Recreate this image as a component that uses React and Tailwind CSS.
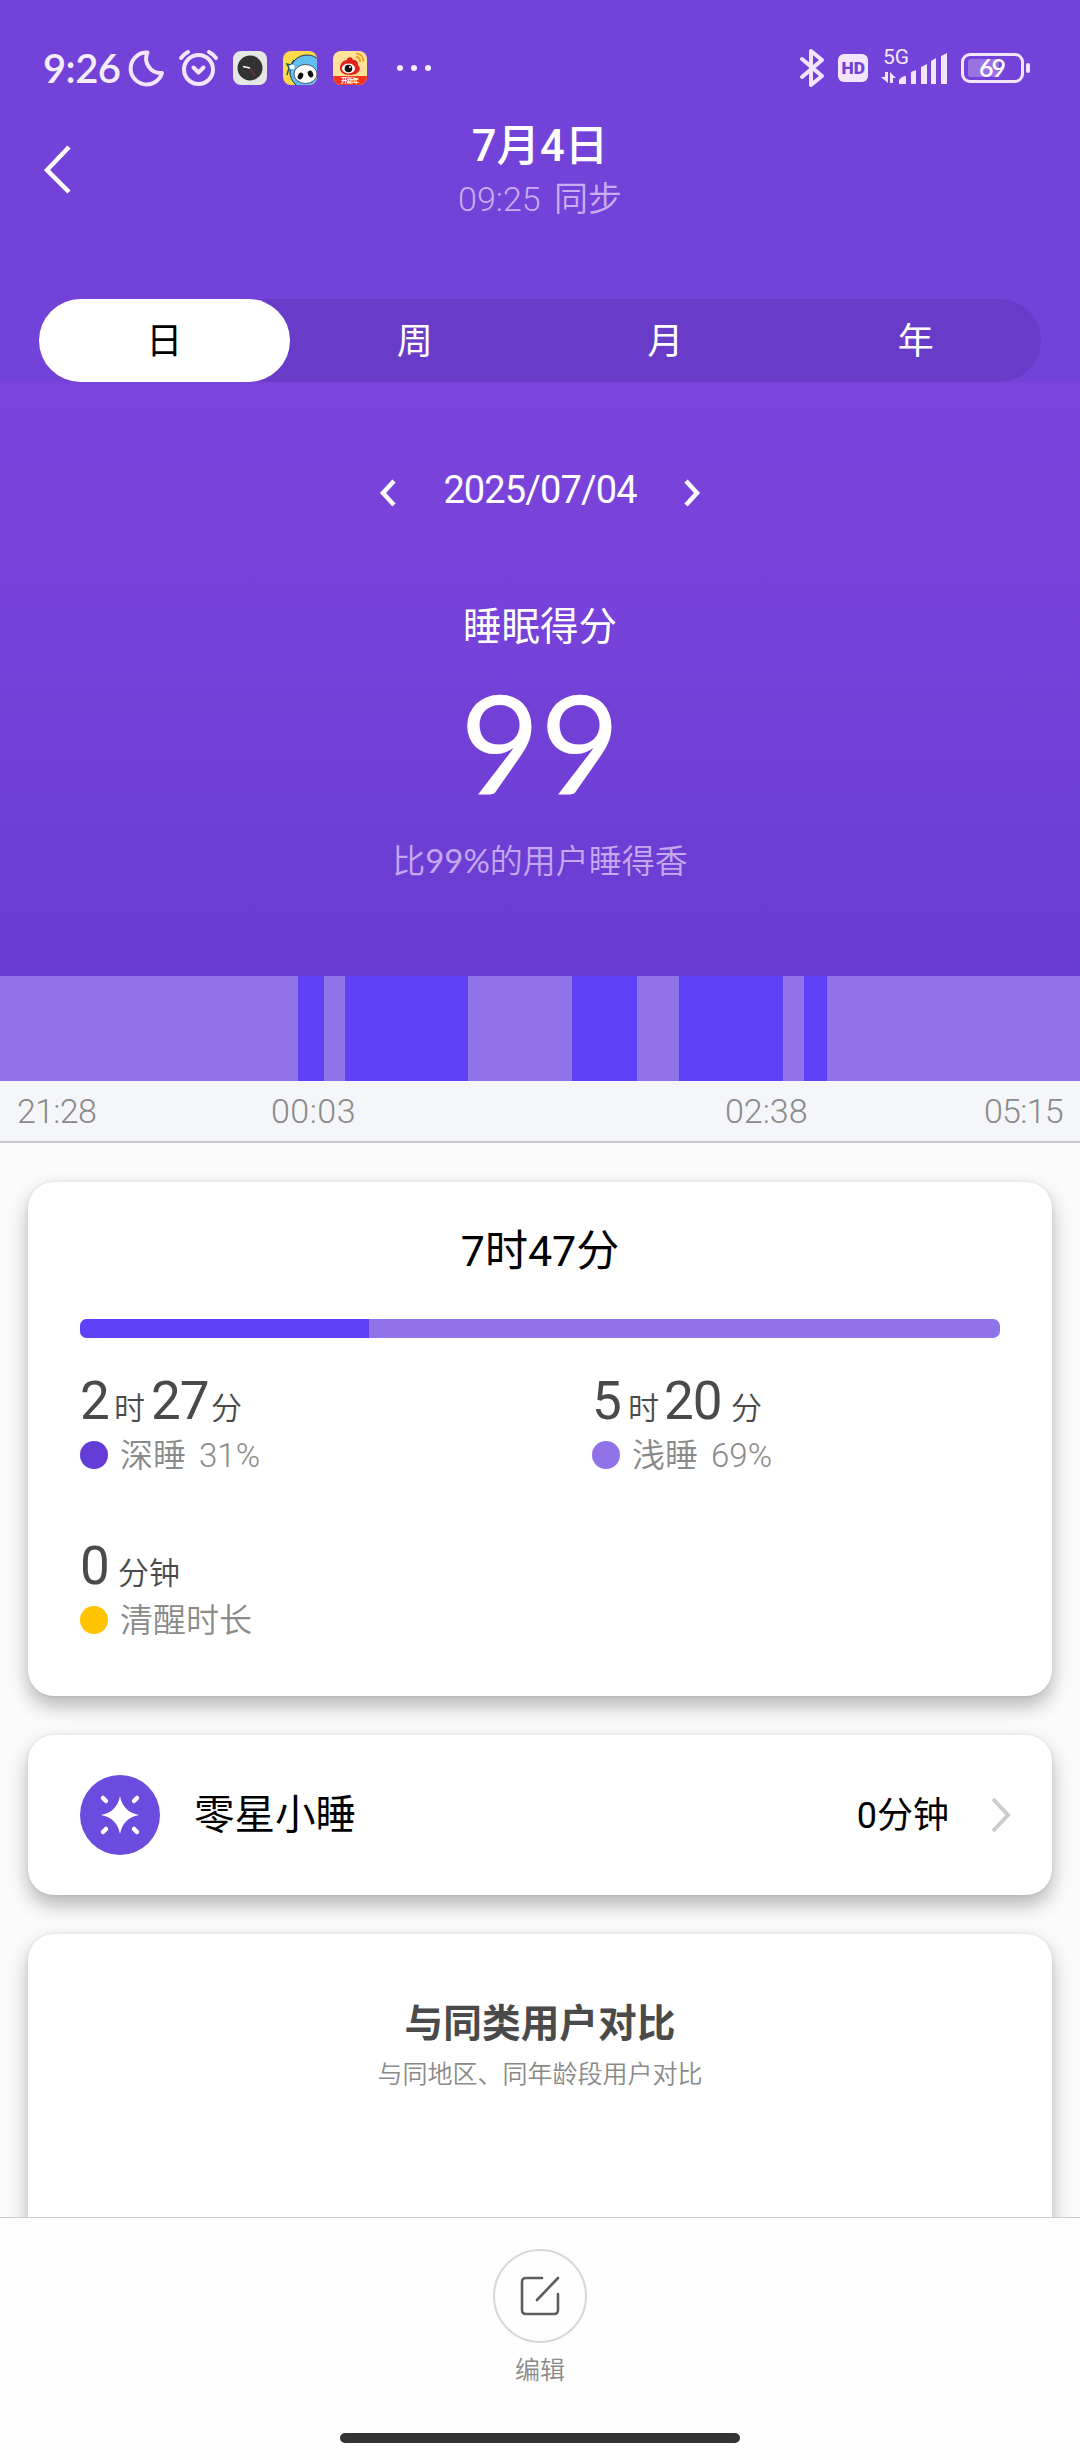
import React from 'react';

const segments = [
  { left: 298, width: 26 },
  { left: 345, width: 123 },
  { left: 572, width: 65 },
  { left: 679, width: 104 },
  { left: 804, width: 23 },
];

const tabs = ['日', '周', '月', '年'];

function StatusBar() {
  return (
    <svg className="block h-24 w-full shrink-0" viewBox="0 0 1080 96" fill="none">
      <text x="43" y="82.500" className="font-[Lato]" fontSize="40" fontWeight="600" textLength="78" fill="#f3edfc">9:26</text>
      {/* do not disturb */}
      <path d="M147.500 52.500A16 16 0 1 0 162 73A14.500 14.500 0 0 1 147.500 52.500Z" stroke="#f3e6fc" strokeWidth="4" strokeLinejoin="round" />
      {/* alarm */}
      <g stroke="#f3e6fc" strokeWidth="4" strokeLinecap="round" strokeLinejoin="round">
        <circle cx="198.500" cy="69.500" r="14.500" />
        <path d="M181 58q3-4 7-6M216 58q-3-4-7-6M193.500 67.500l5 5 5-5" />
      </g>
      {/* clock app */}
      <rect x="233" y="51" width="34" height="34" rx="8" fill="#e6e6e6" />
      <circle cx="250" cy="68" r="12.500" fill="#323232" />
      <path d="M243 66.500l7 1.500" stroke="#fff" strokeWidth="1.500" />
      <path d="M250 68l5 8" stroke="#a33" strokeWidth="1" />
      {/* panda app */}
      <clipPath id="panda"><rect x="283" y="51" width="34" height="34" rx="8" /></clipPath>
      <g clipPath="url(#panda)">
        <rect x="283" y="51" width="34" height="34" fill="#fbd94a" />
        <ellipse cx="307" cy="72" rx="17" ry="17" fill="#62bdf0" stroke="#234" />
        <ellipse cx="305.500" cy="74" rx="11.500" ry="9.500" fill="#fff" stroke="#123" strokeWidth=".7" />
        <ellipse cx="300.500" cy="76" rx="2.600" ry="3.500" fill="#111" transform="rotate(25 300.500 76)" />
        <ellipse cx="310.500" cy="74" rx="2.600" ry="3.500" fill="#111" transform="rotate(-25 310.500 74)" />
        <path d="M287 75l2-7-2-4 4 1 3-5M289 68l4 1" stroke="#145a80" strokeWidth="1.500" />
        <circle cx="292" cy="67" r="2.500" fill="#fff" />
      </g>
      {/* weibo app */}
      <clipPath id="weibo"><rect x="333" y="51" width="34" height="34" rx="8" /></clipPath>
      <g clipPath="url(#weibo)">
        <rect x="333" y="51" width="34" height="34" fill="#ffe19a" />
        <path d="M340 68c0-4 3-8 7-8 0-3 5-4 6 0 4 0 5 2 5 5 5 5-1 10-8 10s-10-3-10-7Z" fill="#e3201b" />
        <ellipse cx="348.500" cy="68.500" rx="6.500" ry="5" fill="#fff" />
        <circle cx="348.500" cy="68.500" r="3.800" fill="#111" />
        <circle cx="350" cy="67" r="1" fill="#fff" />
        <path d="M356 57c3 0 4 2 4 5M356 53.500c5 0 7.500 3.500 7.500 8" stroke="#f5a11c" strokeWidth="1.800" />
        <rect x="333" y="76" width="34" height="9" fill="#f5341c" />
        <text x="341" y="83" fontSize="6.500" fontWeight="700" fill="#fff" textLength="18">开新年</text>
      </g>
      <g fill="#f3edfc">
        <circle cx="400" cy="68" r="3" />
        <circle cx="414" cy="68" r="3" />
        <circle cx="428" cy="68" r="3" />
      </g>
      {/* bluetooth */}
      <path d="M802 59l20 17-11 9V51l11 9-20 17" stroke="#f3e6fc" strokeWidth="4" strokeLinecap="round" strokeLinejoin="round" />
      <rect x="838" y="54" width="30" height="28" rx="6" fill="#f3e6fc" />
      <text x="841.500" y="74" fontSize="16.500" fontWeight="900" textLength="23.500" lengthAdjust="spacingAndGlyphs" fill="#7342d8">HD</text>
      <text x="883" y="64" fontSize="21" textLength="26" fill="#f3e6fc">5G</text>
      {/* signal */}
      <g fill="#f3e6fc">
        <path d="M885 72h3v11l-7-6h4ZM890 83V72l6 6h-3v5Z" />
        <path d="M899 84v-4q3-4 7-4v8ZM911 84V72l5-2v14ZM921 84V67l6-3v20ZM931 84V61l5-3v26ZM941 84V56l6-3v31Z" />
      </g>
      <rect x="962.500" y="54.500" width="60" height="27" rx="7.500" stroke="#f3e6fc" strokeWidth="3" />
      <path d="M971 59h28v18h-28q-3 0-3-3V62q0-3 3-3Z" fill="#9a72e4" />
      <rect x="1026" y="63" width="4" height="10" rx="2" fill="#f3e6fc" />
      <text x="979" y="77" className="font-[Lato]" fontSize="25" fontWeight="600" textLength="27" fill="#fff">69</text>
    </svg>
  );
}

function Stat({ parts, color, label }) {
  return (
    <div className="flex h-[165px] flex-col">
      <div className="flex h-14 items-baseline pt-0.5 whitespace-nowrap text-[#4a4a4a]">
        {parts.map(([num, unit, numClass, unitClass], i) => (
          <React.Fragment key={i}>
            <span className={`text-[53px] leading-[56px] tracking-[-1px] ${numClass}`}>{num}</span>
            <span className={`text-[31px] leading-[56px] font-[350] ${unitClass}`}>{unit}</span>
          </React.Fragment>
        ))}
      </div>
      <div className="mt-1 flex items-center text-[33px] leading-[46px] font-[350] text-[#8a8a8a]">
        <span className={`mr-3 size-7 rounded-full ${color}`}></span>
        <span className="pt-0.5 [word-spacing:5px]">{label}</span>
      </div>
    </div>
  );
}

export default function App() {
  return (
    <div className="flex h-[2460px] w-[1080px] flex-col overflow-hidden bg-[#fbfbfb] font-[Roboto,'Noto_Sans_CJK_SC',sans-serif]">
      {/* Header */}
      <div className="flex h-[382px] shrink-0 flex-col bg-[#7342d9] text-white">
        <StatusBar />
        <div className="flex h-[203px] px-11">
          <svg className="mt-[49px] h-[50px] w-7" viewBox="0 0 28 50" fill="none">
            <path d="M25 2L3 25l22 22" stroke="#fff" strokeWidth="4.500" />
          </svg>
          <div className="mt-6 mr-7 flex-1 text-center">
            <h1 className="text-[43.500px] leading-[54px] font-medium">7月4日</h1>
            <p className="text-[34px] leading-[51px] font-[350] text-[#c9aff2] [word-spacing:5px]">09:25 同步</p>
          </div>
        </div>
        <div className="mx-[39px] flex h-[83px] rounded-full bg-[#693bc9]">
          {tabs.map((t, i) => (
            <div
              key={t}
              className={`flex flex-1 items-center justify-center rounded-full pt-0.5 text-[36px] ${i === 0 ? 'bg-white text-black' : 'text-white'}`}
            >
              {t}
            </div>
          ))}
        </div>
      </div>

      {/* Score */}
      <div className="flex h-[594px] shrink-0 flex-col items-center bg-linear-to-b from-[#7b43db] via-[#7742d9] via-40% to-[#693cd1] text-white">
        <div className="mt-[81px] flex h-14 items-center gap-[46px]">
          <svg className="mt-1 h-7 w-[18px]" viewBox="0 0 18 28" fill="none">
            <path d="M15 2L4 14l11 12" stroke="#fff" strokeWidth="4.500" />
          </svg>
          <span className="-mt-0.5 text-[38px] tracking-[-0.900px]">2025/07/04</span>
          <svg className="mt-1 h-7 w-[18px]" viewBox="0 0 18 28" fill="none">
            <path d="M3 2l11 12L3 26" stroke="#fff" strokeWidth="4.500" />
          </svg>
        </div>
        <div className="mt-20 text-[38.500px] leading-[56px]">睡眠得分</div>
        <div className="mt-[18px] font-[Lato] text-[138px] leading-[138px]">99</div>
        <div className="mt-6 text-[33px] leading-[50px] font-[350] text-[#c4a9f1]">
          比<span className="font-[Lato] font-normal">99%</span>的用户睡得香
        </div>
      </div>

      {/* Timeline, one pixel band per deep sleep period */}
      <div className="relative h-[105px] shrink-0 bg-[#9073e9]">
        {segments.map((s) => (
          <div key={s.left} className="absolute inset-y-0 bg-[#5e40f6]" style={{ left: s.left, width: s.width }}></div>
        ))}
      </div>
      <div className="flex h-[62px] shrink-0 items-center border-b-2 border-[#c9c9cb] bg-[#f5f6f9] pr-[17px] pl-[17px] text-[34px] font-[350] text-[#8a8a8a]">
        <span className="w-[254px] tracking-[-0.700px]">21:28</span>
        <span className="w-[454px] tracking-[0.500px]">00:03</span>
        <span>02:38</span>
        <span className="ml-auto tracking-[-0.700px]">05:15</span>
      </div>

      {/* Cards */}
      <div className="flex flex-1 flex-col gap-[39px] overflow-hidden px-7 pt-[39px]">
        <div className="h-[514px] shrink-0 rounded-[26px] bg-white px-[52px] pt-[39px] shadow-[0_10px_20px_rgba(0,0,0,0.28),0_0_4px_rgba(0,0,0,0.08)]">
          <div className="text-center text-[43px] leading-[60px] text-black">7时47分</div>
          <div className="mt-[38px] flex h-[19px] overflow-hidden rounded-[7px] bg-[#9073e9]">
            <div className="w-[289px] bg-[#5e40f6]"></div>
          </div>
          <div className="mt-[33px] grid grid-cols-[512px_1fr]">
            <Stat parts={[[2, '时', 'w-[34px]', 'w-[37px]'], [27, '分', 'w-[60px]', '']]} color="bg-[#623cd4]" label="深睡 31%" />
            <Stat parts={[[5, '时', 'w-9', 'w-9'], [20, '分', 'w-[67px]', '']]} color="bg-[#9073e9]" label="浅睡 69%" />
            <Stat parts={[[0, '分钟', 'w-[38px]', '']]} color="bg-[#ffc300]" label="清醒时长" />
          </div>
        </div>

        <div className="flex h-40 shrink-0 items-center rounded-[26px] bg-white pr-[41px] pl-[52px] text-black shadow-[0_10px_20px_rgba(0,0,0,0.28),0_0_4px_rgba(0,0,0,0.08)]">
          <svg className="size-20" viewBox="0 0 80 80">
            <circle cx="40" cy="40" r="40" fill="#6c4bdf" />
            <path d="M40 21q3 16 19 19-16 3-19 19-3-16-19-19 16-3 19-19Z" fill="#fff" />
            <path d="M23 23l3 3M57 23l-3 3M23 57l3-3M57 57l-3-3" stroke="#fff" strokeWidth="4.500" strokeLinecap="round" />
          </svg>
          <span className="ml-[34px] text-[40.500px]">零星小睡</span>
          <span className="ml-auto pt-0.5 text-[36px]">0分钟</span>
          <svg className="ml-[42px] h-9 w-5" viewBox="0 0 20 36" fill="none">
            <path d="M2 2l15 16L2 34" stroke="#ccc" strokeWidth="4" />
          </svg>
        </div>

        <div className="h-[400px] shrink-0 rounded-[26px] bg-white pt-[62px] text-center shadow-[0_10px_20px_rgba(0,0,0,0.28),0_0_4px_rgba(0,0,0,0.08)]">
          <h2 className="text-[38.700px] leading-[56px] font-bold text-[#4a4a4a]">与同类用户对比</h2>
          <p className="mt-[5px] text-[25px] leading-[36px] font-[350] text-[#8a8a8a]">与同地区、同年龄段用户对比</p>
        </div>
      </div>

      {/* Bottom action */}
      <div className="flex h-[243px] shrink-0 flex-col items-center border-t border-[#ccc] bg-[#fefefe]">
        <div className="mt-[31px] flex size-[94px] items-center justify-center rounded-full border-2 border-[#d6d6d6]">
          <svg className="size-10" viewBox="0 0 40 40" fill="none" stroke="#5e5e5e" strokeWidth="2.600" strokeLinecap="round">
            <path d="M22 2H6Q2 2 2 6v28q0 4 4 4h28q4 0 4-4V18M38 2L17 24" />
          </svg>
        </div>
        <span className="mt-2.5 text-[25px] leading-9 font-[350] text-[#8a8a8a]">编辑</span>
        <div className="mt-11 h-2.5 w-[400px] rounded-full bg-[#333]"></div>
      </div>
    </div>
  );
}
